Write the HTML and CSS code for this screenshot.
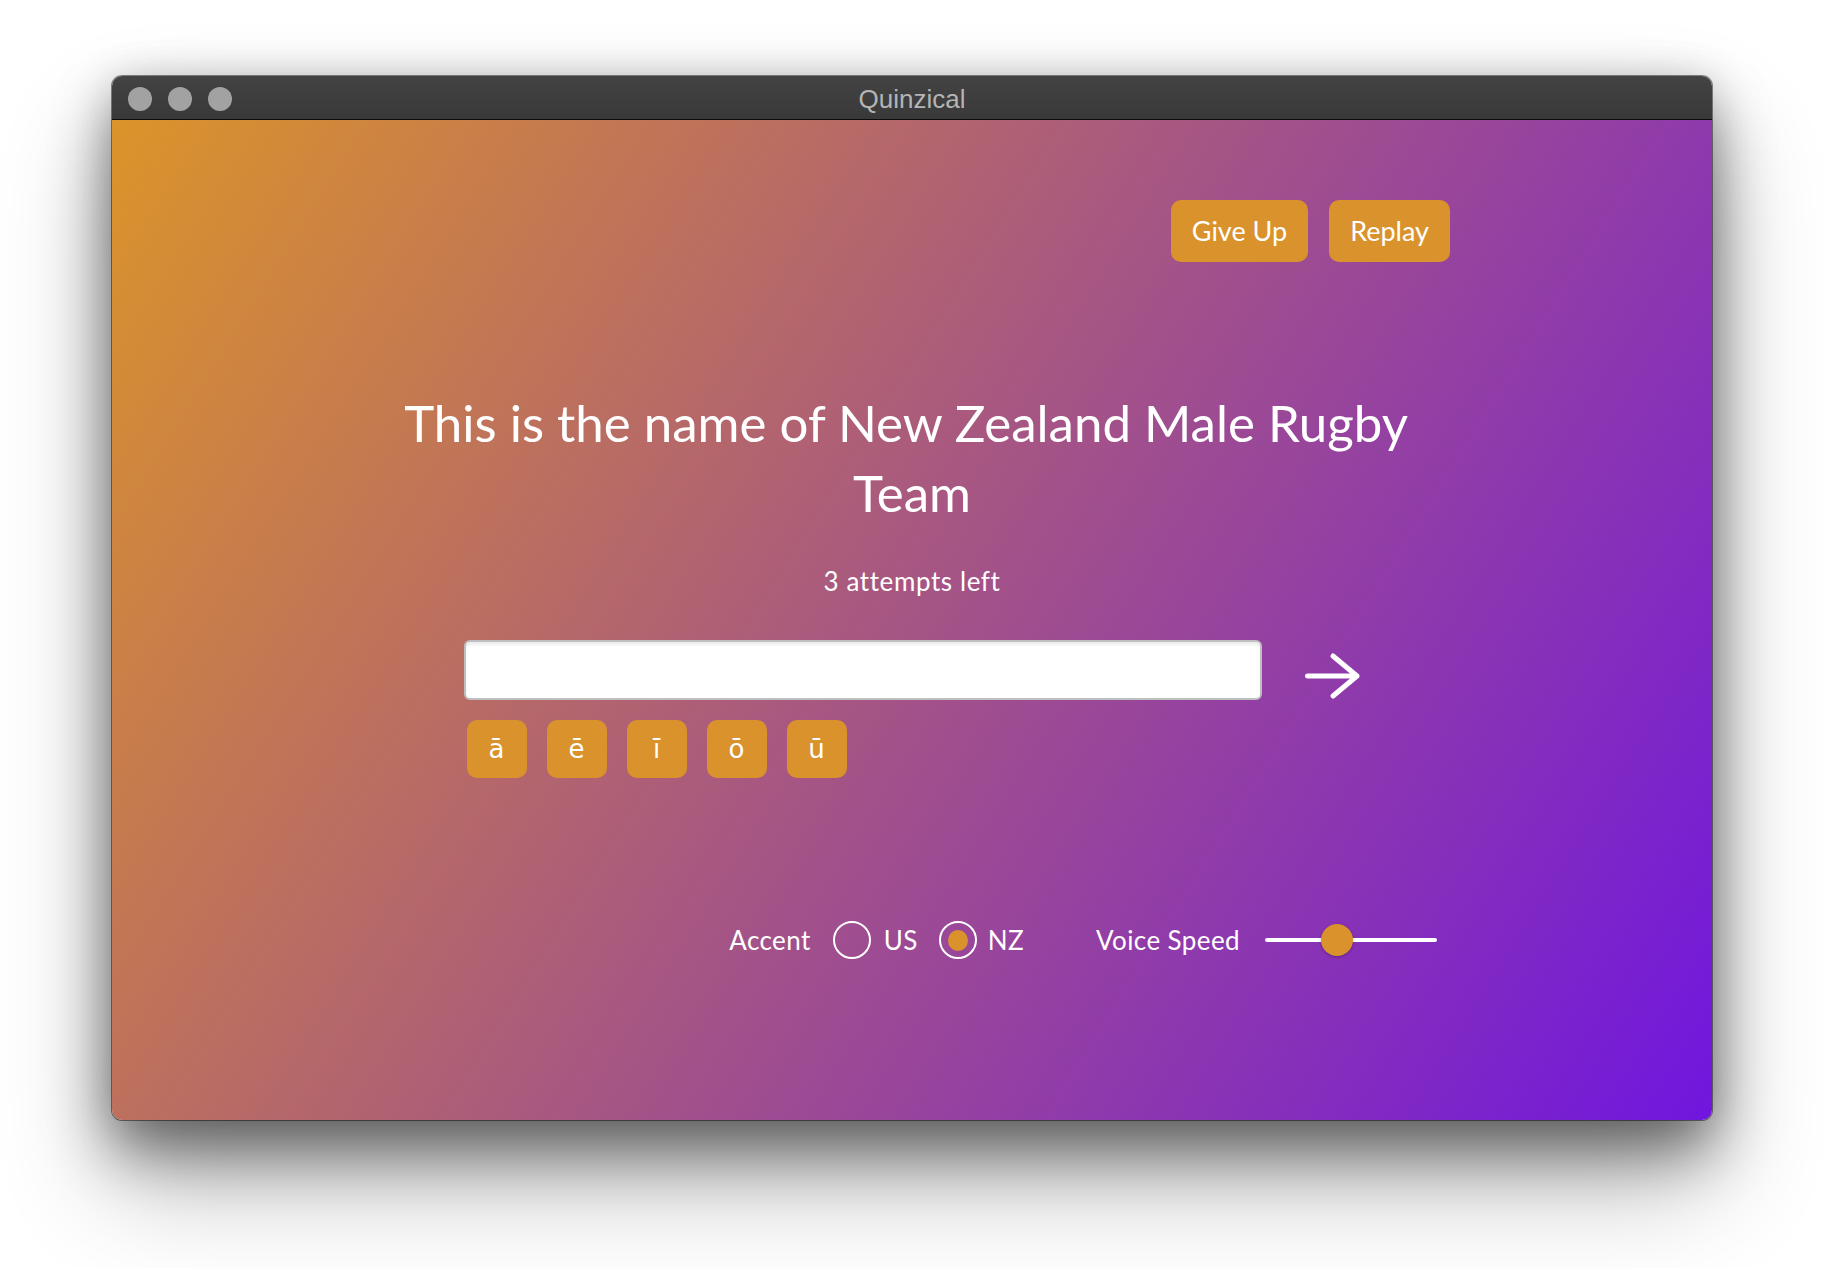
FILE: index.html
```html
<!DOCTYPE html>
<html lang="en">
<head>
<meta charset="utf-8">
<title>Quinzical</title>
<link rel="stylesheet" href="styles.css">
</head>
<body>
<div class="window">
  <div class="titlebar">
    <div class="lights">
      <span class="light"></span>
      <span class="light"></span>
      <span class="light"></span>
    </div>
    <div class="title">Quinzical</div>
    <div class="spacer"></div>
  </div>
  <div class="content">
    <div class="top-actions">
      <button class="btn">Give Up</button>
      <button class="btn">Replay</button>
    </div>
    <h1 class="question">This is the name of New Zealand Male Rugby Team</h1>
    <p class="attempts">3 attempts left</p>
    <div class="answer">
      <div class="answer-row">
        <input class="answer-input" type="text">
        <button class="submit" aria-label="Submit">
          <svg width="58" height="48" viewBox="0 0 58 48">
            <path d="M4.5 24 H54 M30 4 L54 24 L30 44" fill="none" stroke="#fff" stroke-width="5" stroke-linecap="round" stroke-linejoin="round"/>
          </svg>
        </button>
      </div>
      <div class="macrons">
        <button class="macron">ā</button>
        <button class="macron">ē</button>
        <button class="macron">ī</button>
        <button class="macron">ō</button>
        <button class="macron">ū</button>
      </div>
    </div>
    <div class="settings">
      <span class="label">Accent</span>
      <span class="radio"></span>
      <span class="label opt-us">US</span>
      <span class="radio checked"><span class="dot"></span></span>
      <span class="label opt-nz">NZ</span>
      <span class="label speed-label">Voice Speed</span>
      <div class="slider">
        <div class="track"></div>
        <div class="thumb"></div>
      </div>
    </div>
  </div>
</div>
</body>
</html>
```

FILE: styles.css
```css
html, body {
  margin: 0;
  padding: 0;
  background: #ffffff;
}

body {
  width: 1824px;
  height: 1268px;
  overflow: hidden;
  display: flex;
  justify-content: center;
  align-items: flex-start;
  padding-top: 76px;
  box-sizing: border-box;
  font-family: "Lato", "Noto Sans", sans-serif;
}

.window {
  width: 1600px;
  height: 1044px;
  border-radius: 10px;
  overflow: hidden;
  display: flex;
  flex-direction: column;
  box-shadow:
    0 0 0 1px rgba(0, 0, 0, 0.45),
    0 30px 60px rgba(0, 0, 0, 0.45),
    0 60px 110px rgba(0, 0, 0, 0.3),
    0 0 40px rgba(0, 0, 0, 0.12);
}

.titlebar {
  height: 43px;
  flex: none;
  display: grid;
  grid-template-columns: 1fr auto 1fr;
  align-items: center;
  background: linear-gradient(#434343, #393939);
  border-top: 1px solid #6b6b6b;
  border-bottom: 1px solid #0c0c0c;
  box-sizing: content-box;
  margin-top: -1px;
}

.lights {
  display: flex;
  gap: 16px;
  padding-left: 16px;
}

.light {
  width: 24px;
  height: 24px;
  border-radius: 50%;
  background: #a2a2a2;
}

.title {
  font-family: "Liberation Sans", Arial, sans-serif;
  font-size: 26px;
  color: #b4b4b4;
  line-height: 43px;
  padding-top: 2px;
}

.content {
  flex: 1;
  display: flex;
  flex-direction: column;
  padding-top: 80px;
  background: linear-gradient(122deg, #db942a 0%, #7016df 100%);
  color: #ffffff;
}

.top-actions {
  display: flex;
  justify-content: flex-end;
  gap: 21px;
  padding-right: 262px;
}

.btn {
  height: 62px;
  padding: 0 21px;
  border: none;
  border-radius: 10px;
  background: #da922c;
  color: #ffffff;
  font-family: "Lato", "Noto Sans", sans-serif;
  font-size: 27px;
  line-height: 62px;
}

.question {
  margin: 126px auto 0;
  width: 1060px;
  text-align: center;
  font-size: 51px;
  font-weight: 400;
  line-height: 70px;
  white-space: break-spaces;
}

.attempts {
  margin: 37px 0 0;
  text-align: center;
  font-size: 26px;
  line-height: 32px;
  letter-spacing: 0.6px;
}

.answer {
  width: 897px;
  margin: 43px auto 0;
  display: flex;
  flex-direction: column;
}

.answer-row {
  display: flex;
  align-items: flex-start;
  gap: 41px;
}

.answer-input {
  width: 798px;
  height: 60px;
  box-sizing: border-box;
  margin: 0;
  border: 2px solid #bfbfbf;
  border-radius: 6px;
  background: #ffffff;
  box-shadow: inset 0 3px 3px rgba(0, 0, 0, 0.07);
  font-size: 26px;
  padding: 0 12px;
}

.submit {
  margin: 12px 0 0;
  padding: 0;
  border: none;
  background: none;
  width: 58px;
  height: 48px;
  display: block;
}

.submit svg {
  display: block;
}

.macrons {
  display: flex;
  gap: 20px;
  margin: 20px 0 0 3px;
}

.macron {
  width: 60px;
  height: 58px;
  padding: 0;
  border: none;
  border-radius: 10px;
  background: #da922c;
  color: #ffffff;
  font-family: "DejaVu Sans", sans-serif;
  font-size: 26px;
  line-height: 58px;
}

.settings {
  margin-top: 143px;
  height: 38px;
  display: flex;
  align-items: center;
  justify-content: flex-end;
  padding-right: 275px;
}

.label {
  font-size: 26px;
  line-height: 38px;
  letter-spacing: 0.4px;
}

.radio {
  width: 38px;
  height: 38px;
  box-sizing: border-box;
  border: 2px solid #ffffff;
  border-radius: 50%;
  display: flex;
  align-items: center;
  justify-content: center;
  margin-left: 22px;
}

.radio.checked {
  margin-left: 21px;
}

.dot {
  width: 20px;
  height: 21px;
  border-radius: 50%;
  background: #da922c;
}

.opt-us {
  margin-left: 13px;
}

.opt-nz {
  margin-left: 11px;
}

.speed-label {
  margin-left: 72px;
}

.slider {
  position: relative;
  width: 172px;
  height: 38px;
  margin-left: 25px;
  display: flex;
  align-items: center;
}

.track {
  width: 100%;
  height: 4px;
  border-radius: 2px;
  background: #ffffff;
}

.thumb {
  position: absolute;
  left: 56px;
  top: 3px;
  width: 32px;
  height: 32px;
  border-radius: 50%;
  background: #da922c;
  box-shadow: 0 1px 3px rgba(0, 0, 0, 0.3);
}
```
